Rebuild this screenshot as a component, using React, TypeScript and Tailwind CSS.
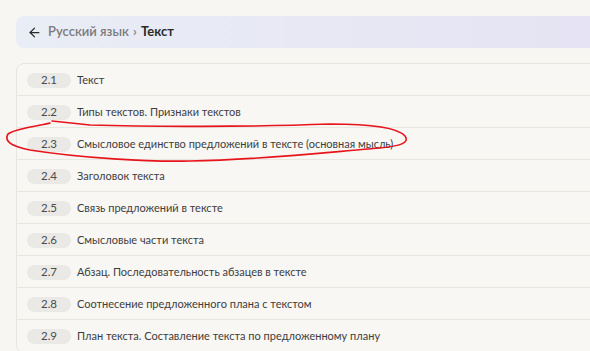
import { ArrowLeft } from 'lucide-react'

const topics = [
  ['2.1', 'Текст'],
  ['2.2', 'Типы текстов. Признаки текстов'],
  ['2.3', 'Смысловое единство предложений в тексте (основная мысль)'],
  ['2.4', 'Заголовок текста'],
  ['2.5', 'Связь предложений в тексте'],
  ['2.6', 'Смысловые части текста'],
  ['2.7', 'Абзац. Последовательность абзацев в тексте'],
  ['2.8', 'Соотнесение предложенного плана с текстом'],
  ['2.9', 'План текста. Составление текста по предложенному плану'],
]

export default function App() {
  return (
    <div
      className="relative w-[590px] h-[351px] overflow-hidden bg-[#f7f6f2] pl-4 pt-4"
      style={{ fontFamily: 'Lato, "Noto Sans", sans-serif' }}
    >
      <div className="w-[600px] h-8 rounded-lg bg-gradient-to-r from-[#e9edf5] to-[#e5e3f3] flex items-center pl-[11px]">
        <ArrowLeft size={15} strokeWidth={2} className="text-[#2b2b2b]" />
        <div className="ml-[6px] text-[13px] font-semibold text-[#7a7a7e]">
          Русский язык <span className="mx-[1px]">›</span>{' '}
          <span className="font-bold text-[#2a2a2a]">Текст</span>
        </div>
      </div>

      <div className="mt-[15px] w-[600px] rounded-lg border border-[#e7e5e0] bg-[#f8f7f4]">
        {topics.map(([num, title]) => (
          <div key={num} className="h-8 flex items-center border-b border-[#e9e7e2] pl-[10px] pt-[1px]">
            <div className="w-11 h-[15px] rounded-full bg-[#ebe9e5] flex items-center justify-center text-[11.5px] text-[#4a4a4a]">
              {num}
            </div>
            <div className="ml-[6px] text-[11px] text-[#3d3d3d]">{title}</div>
          </div>
        ))}
      </div>

      <svg className="absolute left-0 top-0 pointer-events-none" width="590" height="351">
        <path
          d="M50 123 C 44 125, 16 128, 8 134 C 4 141, 10 146, 30 150 C 80 158, 150 162, 190 161 C 260 160, 330 152, 380 148 C 400 146, 410 143, 405 136 C 398 128, 370 124, 330 124 C 250 127, 150 127, 90 125 L 52 121"
          fill="none"
          stroke="#e8141b"
          strokeWidth="1.6"
          strokeLinecap="round"
        />
      </svg>
    </div>
  )
}
